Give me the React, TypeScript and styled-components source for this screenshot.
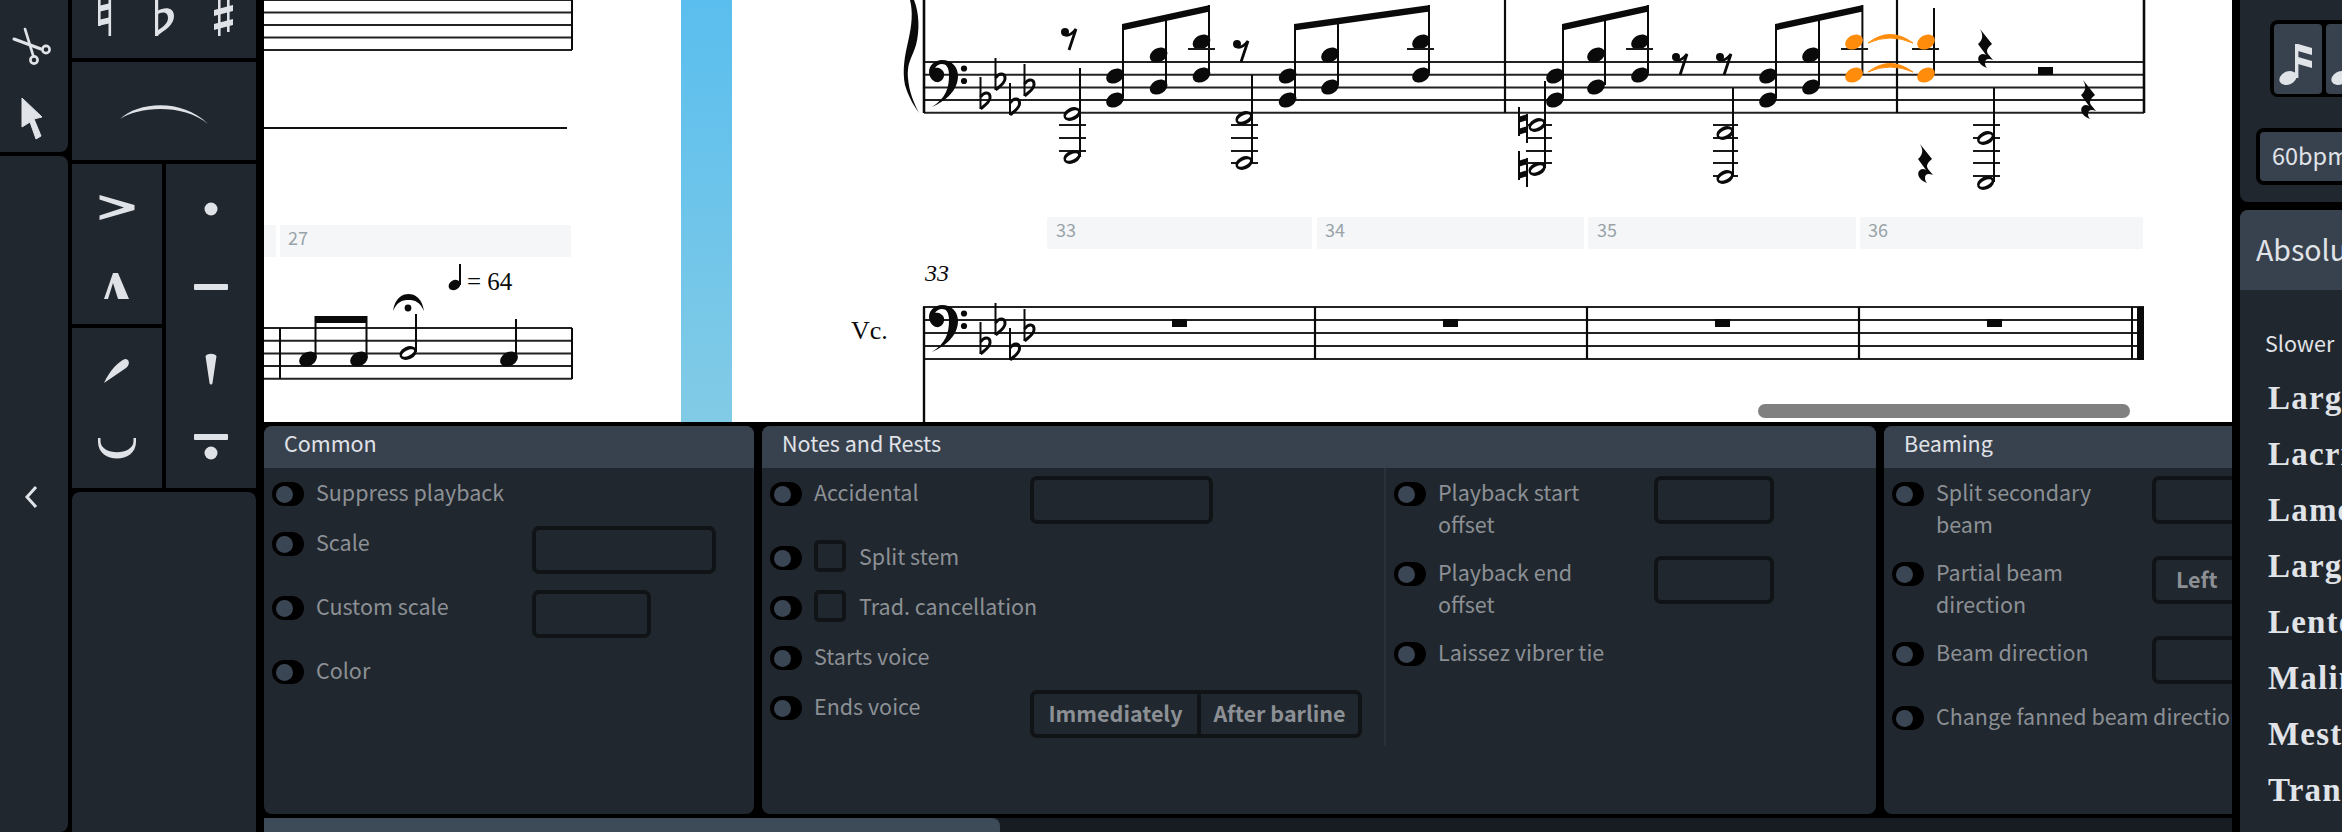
import React from "react";
import styled, { createGlobalStyle } from "styled-components";

const Global = createGlobalStyle`
  html, body { margin: 0; padding: 0; background: #000; overflow: hidden; }
  * { box-sizing: border-box; }
`;

const UI = `"Noto Sans CJK SC", "Source Sans Pro", "Noto Sans", sans-serif`;
const PANEL = "#20272e";
const HEAD = "#38424f";
const LINE = "#111417";
const DIM = "#8c9095";
const BRIGHT = "#e0e3e8";

const Page = styled.div`
  display: flex;
  width: 2342px;
  height: 832px;
  background: #000;
  overflow: hidden;
  font-family: ${UI};
  font-size: 21.5px;
`;

const LeftRail = styled.div`
  flex: none;
  width: 68px;
  display: flex;
  flex-direction: column;
  gap: 4px;
`;
const RailTop = styled.div`
  height: 152px;
  background: ${PANEL};
  border-radius: 0 0 8px 0;
`;
const RailBottom = styled.div`
  flex: 1;
  background: ${PANEL};
  border-radius: 0 8px 8px 0;
  display: flex;
  justify-content: center;
  padding-top: 329px;
  padding-right: 4px;
`;

const Palette = styled.div`
  flex: none;
  width: 184px;
  margin: 0 8px 0 4px;
  display: flex;
  flex-direction: column;
  gap: 4px;
`;
const PalCell = styled.div<{ $h: number }>`
  flex: none;
  height: ${(p) => p.$h}px;
  background: ${PANEL};
`;
const PalSplit = styled.div`
  flex: none;
  height: 324px;
  display: grid;
  grid-template-columns: 90px 90px;
  gap: 4px;
`;
const PalCol = styled.div`
  display: flex;
  flex-direction: column;
  gap: 4px;
`;
const PalGroup = styled.div`
  flex: 1;
  background: ${PANEL};
  display: flex;
  flex-direction: column;
`;
const PalSlot = styled.div`
  flex: 1;
  display: flex;
  align-items: center;
  justify-content: center;
`;
const PalRest = styled.div`
  flex: 1;
  background: ${PANEL};
  border-radius: 8px 8px 0 0;
`;

const Center = styled.div`
  flex: none;
  width: 1968px;
  display: flex;
  flex-direction: column;
  gap: 4px;
`;
const Score = styled.div`
  position: relative;
  flex: none;
  height: 422px;
  background: #fff;
  overflow: hidden;
`;
const PageGap = styled.div`
  position: absolute;
  left: 417px;
  top: 0;
  width: 51px;
  height: 422px;
  background: linear-gradient(#5abeee, #82cbe6);
`;
const ScoreThumb = styled.div`
  position: absolute;
  left: 1494px;
  top: 404px;
  width: 372px;
  height: 14px;
  border-radius: 7px;
  background: #808080;
`;
const ScoreSvg = styled.svg`
  position: absolute;
  inset: 0;
`;

const Props = styled.div`
  flex: none;
  height: 388px;
  display: flex;
  gap: 8px;
  overflow: hidden;
`;
const Panel = styled.section<{ $w: number }>`
  flex: none;
  width: ${(p) => p.$w}px;
  background: ${PANEL};
  border-radius: 8px;
  overflow: hidden;
`;
const PanelHead = styled.header`
  height: 42px;
  background: ${HEAD};
  color: ${BRIGHT};
  padding: 0 20px;
  line-height: 34px;
`;
const PanelBody = styled.div`
  display: flex;
  align-items: flex-start;
`;
const Col = styled.div<{ $w?: number; $rule?: boolean }>`
  flex: none;
  width: ${(p) => (p.$w ? `${p.$w}px` : "auto")};
  padding: 8px 8px 8px;
  height: 278px;
  border-right: ${(p) => (p.$rule ? "2px solid #2a3138" : "none")};
`;
const Row = styled.div`
  display: flex;
  align-items: flex-start;
  min-height: 34px;
  margin-bottom: 16px;
`;
const Toggle = styled.span`
  flex: none;
  width: 32px;
  height: 24px;
  margin: 6px 12px 0 0;
  border-radius: 12px;
  background: #000;
  position: relative;
  &::after {
    content: "";
    position: absolute;
    left: 4px;
    top: 3.5px;
    width: 17px;
    height: 17px;
    border-radius: 50%;
    background: #3b4654;
  }
`;
const Label = styled.span<{ $wrap?: boolean; $free?: boolean }>`
  flex: none;
  width: ${(p) => (p.$free ? "auto" : "216px")};
  padding: 0 ${(p) => (p.$wrap ? "40px" : "0")} 1px 0;
  margin-bottom: -1px;
  line-height: 32px;
  color: ${DIM};
  white-space: ${(p) => (p.$wrap ? "normal" : "nowrap")};
`;
const Check = styled.span`
  flex: none;
  width: 32px;
  height: 32px;
  margin-right: 13px;
  border: 4px solid ${LINE};
  border-radius: 5px;
`;
const Field = styled.div<{ $w: number }>`
  flex: none;
  width: ${(p) => p.$w}px;
  height: 48px;
  border: 4px solid ${LINE};
  border-radius: 7px;
  color: ${DIM};
  font-weight: 700;
  line-height: 38px;
  padding-left: 20px;
`;
const Segment = styled.div`
  flex: none;
  display: flex;
  width: 332px;
  height: 48px;
  border: 4px solid ${LINE};
  border-radius: 7px;
`;
const SegBtn = styled.span<{ $w: number; $rule?: boolean }>`
  flex: none;
  width: ${(p) => p.$w}px;
  text-align: center;
  line-height: 38px;
  font-weight: 700;
  color: ${DIM};
  border-right: ${(p) => (p.$rule ? `4px solid ${LINE}` : "none")};
`;

const HScroll = styled.div`
  flex: 1;
  background: #171c22;
`;
const HThumb = styled.div`
  width: 736px;
  height: 100%;
  background: #3d4a57;
  border-radius: 0 8px 0 0;
`;

const Right = styled.aside`
  flex: none;
  width: 102px;
  margin-left: 8px;
  display: flex;
  flex-direction: column;
  gap: 8px;
  overflow: hidden;
`;
const RightTop = styled.div`
  flex: none;
  height: 202px;
  background: ${PANEL};
  border-radius: 0 0 0 8px;
  padding: 20px 0 0 16px;
`;
const NoteGroup = styled.div`
  display: flex;
  gap: 4px;
  margin-left: 14px;
  padding: 4px 0 3px 4px;
  width: 200px;
  height: 77px;
  background: #000;
  border-radius: 8px;
`;
const NoteBtn = styled.span`
  flex: none;
  width: 48px;
  height: 70px;
  background: ${HEAD};
  border-radius: 4px;
`;
const Bpm = styled.div`
  margin-top: 31px;
  width: 200px;
  height: 57px;
  border: 4px solid #000;
  border-radius: 8px;
  background: ${HEAD};
  color: ${BRIGHT};
  font-size: 23.5px;
  line-height: 46px;
  padding-left: 12px;
  white-space: nowrap;
`;
const RightBody = styled.div`
  flex: 1;
  background: ${PANEL};
  border-radius: 8px 0 0 0;
  overflow: hidden;
  white-space: nowrap;
`;
const RightHead = styled.div`
  height: 80px;
  background: ${HEAD};
  color: ${BRIGHT};
  font-size: 28.5px;
  line-height: 77px;
  padding-left: 16px;
`;
const Slower = styled.div`
  color: ${BRIGHT};
  margin: 36px 0 0 25px;
  line-height: 34px;
`;
const TempoList = styled.div`
  margin: 10px 0 0 28px;
  display: flex;
  flex-direction: column;
`;
const Tempo = styled.div`
  font-family: "Liberation Serif", serif;
  font-weight: 700;
  font-size: 33px;
  letter-spacing: 1.2px;
  height: 56px;
  line-height: 56px;
  color: ${BRIGHT};
`;

/* ---- score drawing ---- */
const INK = "#0a0a0a";
const ORANGE = "#ff8c0a";

const Head = ({ x, y, c = INK }: { x: number; y: number; c?: string }) => (
  <ellipse cx={x} cy={y} rx={9.4} ry={6.9} fill={c} transform={`rotate(-30 ${x} ${y})`} />
);
const Hollow = ({ x, y }: { x: number; y: number }) => (
  <g transform={`rotate(-25 ${x} ${y})`}>
    <ellipse cx={x} cy={y} rx={9} ry={6.4} fill={INK} />
    <ellipse cx={x} cy={y} rx={6.6} ry={2.7} fill="#fff" />
  </g>
);
const V = ({ x, a, b, w = 2, c = INK }: { x: number; a: number; b: number; w?: number; c?: string }) => (
  <line x1={x} x2={x} y1={a} y2={b} stroke={c} strokeWidth={w} />
);
const H = ({ y, a, b, w = 2, c = "#1a1a1a" }: { y: number; a: number; b: number; w?: number; c?: string }) => (
  <line x1={a} x2={b} y1={y} y2={y} stroke={c} strokeWidth={w} />
);
const Beam = ({ a, b, ya, yb, t = 6.5 }: { a: number; b: number; ya: number; yb: number; t?: number }) => (
  <polygon points={`${a},${ya} ${b},${yb} ${b},${yb + t} ${a},${ya + t}`} fill={INK} />
);
const Staff = ({ y, a, b, gap = 12.7 }: { y: number; a: number; b: number; gap?: number }) => (
  <>
    {[0, 1, 2, 3, 4].map((i) => (
      <H key={i} y={y + i * gap} a={a} b={b} w={2} c="#222" />
    ))}
  </>
);
const Flat = ({ x, y }: { x: number; y: number }) => (
  <g>
    <line x1={x} x2={x} y1={y} y2={y + 32} stroke={INK} strokeWidth={2} />
    <path
      d={`M${x} ${y + 20} C${x + 4} ${y + 14} ${x + 10} ${y + 15} ${x + 9.5} ${y + 21} C${x + 9} ${y + 26} ${x + 3} ${y + 29} ${x} ${y + 32}`}
      fill="none"
      stroke={INK}
      strokeWidth={3}
    />
  </g>
);
const Clef = ({ y }: { y: number }) => (
  <g transform={`translate(0 ${y - 62})`}>
    <path
      d="M932 107 C946 98 949 88 949 75 C949 67 946 64 942 64 C939 64 936 66 935 68 C938 67 943 69 944 73 C945 78 941 83 936 82 C932 81 929 76 929 72 C929 65 935 60 942 60 C952 60 958 67 958 76 C958 90 946 101 932 107 Z"
      fill={INK}
    />
    <circle cx={964} cy={68.5} r={3.1} fill={INK} />
    <circle cx={964} cy={81} r={3.1} fill={INK} />
    <Flat x={980.5} y={77} />
    <Flat x={995.5} y={58} />
    <Flat x={1010} y={83} />
    <Flat x={1024.5} y={64} />
  </g>
);
const ERest = ({ x, y }: { x: number; y: number }) => (
  <g>
    <circle cx={x - 5} cy={y + 4} r={4} fill={INK} />
    <path d={`M${x - 7} ${y + 6} C${x - 3} ${y + 9} ${x + 2} ${y + 6} ${x + 6} ${y + 1} L${x - 1} ${y + 22}`} fill="none" stroke={INK} strokeWidth={2.8} />
  </g>
);
const QRest = ({ x, y }: { x: number; y: number }) => (
  <path
    transform={`translate(${x} ${y})`}
    d="M2 0 L14 15 C9 19 8 22 10 25 L15 31 C10 29 7 30 7 34 C7 36 8 38 9 39 C3 37 -1 32 0.500 28 C2 25 5 24 8 26 L0 15 C5 11 5.500 6 2 0 Z"
    fill={INK}
  />
);
const Nat = ({ x, y }: { x: number; y: number }) => (
  <g>
    <line x1={x + 1} x2={x + 1} y1={y} y2={y + 29} stroke={INK} strokeWidth={2} />
    <line x1={x + 9} x2={x + 9} y1={y + 7} y2={y + 36} stroke={INK} strokeWidth={2} />
    <polygon points={`${x},${y + 10} ${x + 10},${y + 7} ${x + 10},${y + 13} ${x},${y + 16}`} fill={INK} />
    <polygon points={`${x},${y + 22} ${x + 10},${y + 19} ${x + 10},${y + 25} ${x},${y + 28}`} fill={INK} />
  </g>
);
const Dyad = ({ hx, y1, y2, sx, top }: { hx: number; y1: number; y2: number; sx: number; top: number }) => (
  <>
    <V x={sx} a={top} b={y2 - 2} />
    <Head x={hx} y={y1} />
    <Head x={hx} y={y2} />
  </>
);
const Ledgers = ({ a, b, ys }: { a: number; b: number; ys: number[] }) => (
  <>
    {ys.map((y) => (
      <H key={y} y={y} a={a} b={b} w={2} />
    ))}
  </>
);
const Whole = ({ x, y }: { x: number; y: number }) => <rect x={x} y={y} width={15} height={8} fill={INK} />;
const Tie = ({ y }: { y: number }) => (
  <path d={`M1868 ${y + 8} Q1890 ${y - 9} 1913 ${y + 8} Q1890 ${y - 2} 1868 ${y + 8} Z`} fill={ORANGE} stroke={ORANGE} strokeWidth={1} />
);
const Strip = ({ x, w, y, n, tx }: { x: number; w: number; y: number; n: string; tx: number }) => (
  <>
    <rect x={x} y={y} width={w} height={32} rx={2} fill="#f4f6f8" />
    <text x={tx} y={y + 20} fontFamily={UI} fontSize={18} fill="#9aa3a8">
      {n}
    </text>
  </>
);

const Music = () => (
  <ScoreSvg width={1968} height={422} viewBox="264 0 1968 422">
    {/* left page */}
    <Staff y={0} a={264} b={572} gap={12.5} />
    <V x={572} a={0} b={50} w={2} />
    <H y={128} a={264} b={567} w={2} c="#111" />
    <rect x={264} y={225} width={12} height={32} fill="#f4f6f8" />
    <Strip x={280} w={291} y={225} n="27" tx={288} />
    <Staff y={328} a={264} b={572} />
    <V x={280} a={328} b={379} w={2} />
    <V x={572} a={328} b={379} w={2} />
    <V x={315.5} a={316} b={358} />
    <V x={366.5} a={316} b={358} />
    <rect x={315} y={316} width={52} height={7} fill={INK} />
    <Head x={308} y={359} />
    <Head x={359} y={359} />
    <V x={416} a={314} b={352} />
    <Hollow x={408} y={353} />
    <path d="M393 311 C395 298 402 294 408.5 294 C415 294 422 298 424 311 C420 302 415 300 408.5 300 C402 300 397 302 393 311 Z" fill={INK} />
    <circle cx={408} cy={308} r={3.4} fill={INK} />
    <V x={516} a={319} b={358} />
    <Head x={509} y={359} />
    <V x={460} a={264} b={285} />
    <ellipse cx={454.5} cy={285} rx={6.2} ry={4.8} fill={INK} transform="rotate(-28 454.5 285)" />
    <text x={467} y={290} fontFamily="Liberation Serif, serif" fontSize={25} fill={INK}>
      = 64
    </text>

    {/* right page, piano */}
    <path d="M914 0 C919 12 920 30 916 45 C912 58 907 62 908 78 C909 92 914 103 919 113 C912 103 908 95 905 85 C902 70 905 55 908 42 C912 25 913 12 910 0 Z" fill={INK} />
    <Staff y={62} a={924} b={2144} />
    <V x={924} a={0} b={113} w={2.6} />
    <V x={1505} a={0} b={113} w={2.2} />
    <V x={1897} a={0} b={113} w={2.2} />
    <V x={2144} a={0} b={113} w={2.6} />
    <Clef y={62} />

    <ERest x={1070} y={28} />
    <Ledgers a={1059} b={1086} ys={[125, 138, 151]} />
    <V x={1080} a={68} b={157} />
    <Hollow x={1072} y={114} />
    <Hollow x={1072} y={157} />
    <Dyad hx={1115} y1={76} y2={100} sx={1123} top={24} />
    <Dyad hx={1158.6} y1={55} y2={87} sx={1166} top={15} />
    <Dyad hx={1201.5} y1={42} y2={75} sx={1209} top={5} />
    <H y={49} a={1188} b={1215} w={2} />
    <Beam a={1122} b={1210} ya={24} yb={5} />

    <ERest x={1242} y={40} />
    <Ledgers a={1231} b={1258} ys={[125, 138, 151, 163]} />
    <V x={1252} a={75} b={163} />
    <Hollow x={1244} y={118} />
    <Hollow x={1244} y={163} />
    <Dyad hx={1287.6} y1={76} y2={100} sx={1295} top={24} />
    <Dyad hx={1330} y1={55} y2={87} sx={1338} top={20} />
    <Dyad hx={1421} y1={42} y2={75} sx={1429} top={5} />
    <H y={49} a={1407} b={1434} w={2} />
    <Beam a={1294} b={1430} ya={24} yb={5} />

    <Nat x={1518} y={107} />
    <Nat x={1518} y={151} />
    <Ledgers a={1526} b={1552} ys={[125, 138, 151, 163]} />
    <V x={1545} a={81} b={168} />
    <Hollow x={1537} y={125} />
    <Hollow x={1537} y={169} />
    <Dyad hx={1555} y1={76} y2={100} sx={1563} top={24} />
    <Dyad hx={1596} y1={55} y2={87} sx={1605} top={15} />
    <Dyad hx={1640} y1={42} y2={75} sx={1648} top={5} />
    <H y={49} a={1626} b={1653} w={2} />
    <Beam a={1562} b={1649} ya={24} yb={5} />

    <ERest x={1681} y={53} />
    <ERest x={1725} y={53} />
    <Ledgers a={1713} b={1738} ys={[125, 138, 151, 163, 176]} />
    <V x={1733} a={88} b={176} />
    <Hollow x={1725} y={133} />
    <Hollow x={1725} y={177} />
    <Dyad hx={1768} y1={76} y2={100} sx={1776} top={24} />
    <Dyad hx={1811} y1={55} y2={87} sx={1819} top={15} />
    <V x={1862.4} a={5} b={74} />
    <H y={49} a={1841} b={1868} w={2} />
    <Head x={1854} y={42} c={ORANGE} />
    <Head x={1854} y={75} c={ORANGE} />
    <Beam a={1775} b={1863} ya={24} yb={5} />
    <Tie y={35} />
    <Tie y={64} />
    <V x={1934} a={8} b={74} />
    <H y={49} a={1912} b={1939} w={2} />
    <Head x={1926} y={42} c={ORANGE} />
    <Head x={1926} y={75} c={ORANGE} />

    <QRest x={1978} y={29} />
    <QRest x={1918} y={144} />
    <QRest x={2081} y={80} />
    <Ledgers a={1973} b={2000} ys={[125, 138, 151, 163, 176]} />
    <V x={1994} a={88} b={182} />
    <Hollow x={1985.6} y={138} />
    <Hollow x={1985.6} y={183} />
    <Whole x={2038} y={67} />

    {/* cello */}
    <Strip x={1047} w={265} y={217} n="33" tx={1056} />
    <Strip x={1317} w={267} y={217} n="34" tx={1325} />
    <Strip x={1588} w={268} y={217} n="35" tx={1597} />
    <Strip x={1860} w={283} y={217} n="36" tx={1868} />
    <text x={925} y={281} fontFamily="Liberation Serif, serif" fontStyle="italic" fontSize={24} fill={INK}>
      33
    </text>
    <text x={851} y={339} fontFamily="Liberation Serif, serif" fontSize={26} fill={INK}>
      Vc.
    </text>
    <Staff y={307} a={923} b={2144} gap={13} />
    <V x={924} a={307} b={422} w={2.4} />
    <Clef y={307} />
    <V x={1315} a={307} b={359} w={2.2} />
    <V x={1587} a={307} b={359} w={2.2} />
    <V x={1859} a={307} b={359} w={2.2} />
    <V x={2132} a={307} b={359} w={2} />
    <rect x={2137} y={307} width={7} height={53} fill={INK} />
    <Whole x={1172} y={319} />
    <Whole x={1443} y={319} />
    <Whole x={1715} y={319} />
    <Whole x={1987} y={319} />
  </ScoreSvg>
);

/* ---- tool icons ---- */
const Scissors = () => (
  <svg width="68" height="152" viewBox="0 0 68 152">
    <g fill="none" stroke={BRIGHT} strokeWidth={2.6} strokeLinecap="round">
      <path d="M25 29 L33 55" />
      <path d="M14 39 L41 49" strokeWidth={3} />
      <circle cx={34} cy={60} r={3.6} />
      <circle cx={46} cy={49.5} r={3.6} />
    </g>
    <path
      d="M22 98 L42 117 L34 119 L41 136 L36 139 L30 122 L22 127 Z"
      fill={BRIGHT}
      stroke={BRIGHT}
      strokeWidth={1}
      strokeLinejoin="round"
    />
  </svg>
);
const Chevron = () => (
  <svg width="16" height="24" viewBox="0 0 16 24">
    <path d="M12 2 L3 12 L12 22" fill="none" stroke={BRIGHT} strokeWidth={3} />
  </svg>
);
const Accidentals = () => (
  <svg width="184" height="58" viewBox="72 0 184 58">
    <g fill="#dfe2e6">
      <rect x={98} y={0} width={2.6} height={26} />
      <rect x={108.5} y={0} width={2.6} height={36} />
      <path d="M98 6 L111 3 L111 9 L98 12 Z M98 20 L111 17 L111 23 L98 26 Z" fillRule="evenodd" />
      <rect x={155} y={0} width={3.2} height={36} />
      <path d="M157 36 C165 30 174 25 174 16 C174 8 166 6 157 11 L157 15 C162 11 168 12 168 18 C168 24 161 28 157 31 Z" />
      <rect x={218} y={0} width={2.6} height={36} />
      <rect x={227} y={0} width={2.6} height={32} />
      <path d="M214 10 L233 5 L233 11 L214 16 Z M214 24 L233 19 L233 25 L214 30 Z" />
    </g>
  </svg>
);
const SlurIcon = () => (
  <svg width="184" height="98" viewBox="72 62 184 98">
    <path d="M120 119 C138 102 182 98 208 124 C184 104 140 106 120 119 Z" fill="#dfe2e6" />
  </svg>
);
const Slot = ({ y0, children }: { y0: number; children: React.ReactNode }) => (
  <PalSlot>
    <svg width="90" height="80" viewBox={`0 ${y0} 90 80`}>
      <g fill="#dfe2e6">{children}</g>
    </svg>
  </PalSlot>
);
const Palettes = () => (
  <>
    <PalCell $h={58}>
      <Accidentals />
    </PalCell>
    <PalCell $h={98}>
      <SlurIcon />
    </PalCell>
    <PalSplit>
      <PalCol>
        <PalGroup>
          <Slot y0={164}>
            <path d="M27.5 195 L62.5 205 L62.5 210 L27.5 220 L27.5 215.500 L52 207.500 L27.5 199.500 Z" />
          </Slot>
          <Slot y0={244}>
            <path d="M32 299 L41 273 L46 273 L57 299 L46 299 L41 283 L36 299 Z" />
          </Slot>
        </PalGroup>
        <PalGroup>
          <Slot y0={328}>
            <path d="M32 383 C38 370 46 362 53 359 C58 359 58 365 54 368 Z" />
          </Slot>
          <Slot y0={408}>
            <path d="M26 438 L26 442 C26 464 64 464 64 442 L64 438 L61.500 438 L61.500 441 C61.500 456 28.500 456 28.500 441 L28.500 438 Z" />
          </Slot>
        </PalGroup>
      </PalCol>
      <PalCol>
        <PalGroup>
          <Slot y0={164}>
            <circle cx={45} cy={208} r={6.5} />
          </Slot>
          <Slot y0={245}>
            <rect x={28} y={283} width={34} height={6} rx={1} />
          </Slot>
          <Slot y0={326}>
            <path d="M39.5 355 C42 352 48 352 50.500 355 L46.500 382 C46 384 44 384 43.500 382 Z" />
          </Slot>
          <Slot y0={407}>
            <rect x={28} y={433} width={34} height={6} rx={1} />
            <circle cx={45} cy={452} r={6.5} />
          </Slot>
        </PalGroup>
      </PalCol>
    </PalSplit>
    <PalRest />
  </>
);
const DoubleNote = () => (
  <svg width="48" height="70" viewBox="0 0 48 70">
    <ellipse cx={14} cy={54} rx={9} ry={6.5} fill={BRIGHT} transform="rotate(-25 14 54)" />
    <rect x={21} y={20} width={3.4} height={34} fill={BRIGHT} />
    <path d="M24 20 L38 24 L38 31 L24 27 Z M24 33 L38 37 L38 44 L24 40 Z" fill={BRIGHT} />
  </svg>
);
const SecondNote = () => (
  <svg width="48" height="70" viewBox="0 0 48 70">
    <ellipse cx={14} cy={54} rx={9} ry={6.5} fill={BRIGHT} transform="rotate(-25 14 54)" />
  </svg>
);

const RowItem = ({ label, wrap, field, free }: { label: string; wrap?: boolean; field?: React.ReactNode; free?: boolean }) => (
  <Row>
    <Toggle />
    <Label $wrap={wrap} $free={free}>
      {label}
    </Label>
    {field}
  </Row>
);
const CheckRow = ({ label }: { label: string }) => (
  <Row>
    <Toggle />
    <Check />
    <Label $free>{label}</Label>
  </Row>
);

export default function App() {
  return (
    <Page>
      <Global />
      <LeftRail>
        <RailTop>
          <Scissors />
        </RailTop>
        <RailBottom>
          <Chevron />
        </RailBottom>
      </LeftRail>
      <Palette>
        <Palettes />
      </Palette>
      <Center>
        <Score>
          <PageGap />
          <Music />
          <ScoreThumb />
        </Score>
        <Props>
          <Panel $w={490}>
            <PanelHead>Common</PanelHead>
            <PanelBody>
              <Col>
                <RowItem label="Suppress playback" />
                <RowItem label="Scale" field={<Field $w={184} />} />
                <RowItem label="Custom scale" field={<Field $w={119} />} />
                <RowItem label="Color" />
              </Col>
            </PanelBody>
          </Panel>
          <Panel $w={1114}>
            <PanelHead>Notes and Rests</PanelHead>
            <PanelBody>
              <Col $w={624} $rule>
                <RowItem label="Accidental" field={<Field $w={183} />} />
                <CheckRow label="Split stem" />
                <CheckRow label="Trad. cancellation" />
                <RowItem label="Starts voice" />
                <Row>
                  <Toggle />
                  <Label>Ends voice</Label>
                  <Segment>
                    <SegBtn $w={167} $rule>
                      Immediately
                    </SegBtn>
                    <SegBtn $w={157}>After barline</SegBtn>
                  </Segment>
                </Row>
              </Col>
              <Col>
                <RowItem label="Playback start offset" wrap field={<Field $w={120} />} />
                <RowItem label="Playback end offset" wrap field={<Field $w={120} />} />
                <RowItem label="Laissez vibrer tie" />
              </Col>
            </PanelBody>
          </Panel>
          <Panel $w={600}>
            <PanelHead>Beaming</PanelHead>
            <PanelBody>
              <Col>
                <RowItem label="Split secondary beam" wrap field={<Field $w={140} />} />
                <RowItem label="Partial beam direction" wrap field={<Field $w={140}>Left</Field>} />
                <RowItem label="Beam direction" field={<Field $w={140} />} />
                <RowItem label="Change fanned beam direction" free />
              </Col>
            </PanelBody>
          </Panel>
        </Props>
        <HScroll>
          <HThumb />
        </HScroll>
      </Center>
      <Right>
        <RightTop>
          <NoteGroup>
            <NoteBtn>
              <DoubleNote />
            </NoteBtn>
            <NoteBtn>
              <SecondNote />
            </NoteBtn>
          </NoteGroup>
          <Bpm>60bpm</Bpm>
        </RightTop>
        <RightBody>
          <RightHead>Absolute tempo</RightHead>
          <Slower>Slower</Slower>
          <TempoList>
            {["Largo", "Lacrimoso", "Lamentoso", "Larghissimo", "Lento", "Malinconico", "Mesto", "Tranquillo"].map((t) => (
              <Tempo key={t}>{t}</Tempo>
            ))}
          </TempoList>
        </RightBody>
      </Right>
    </Page>
  );
}
